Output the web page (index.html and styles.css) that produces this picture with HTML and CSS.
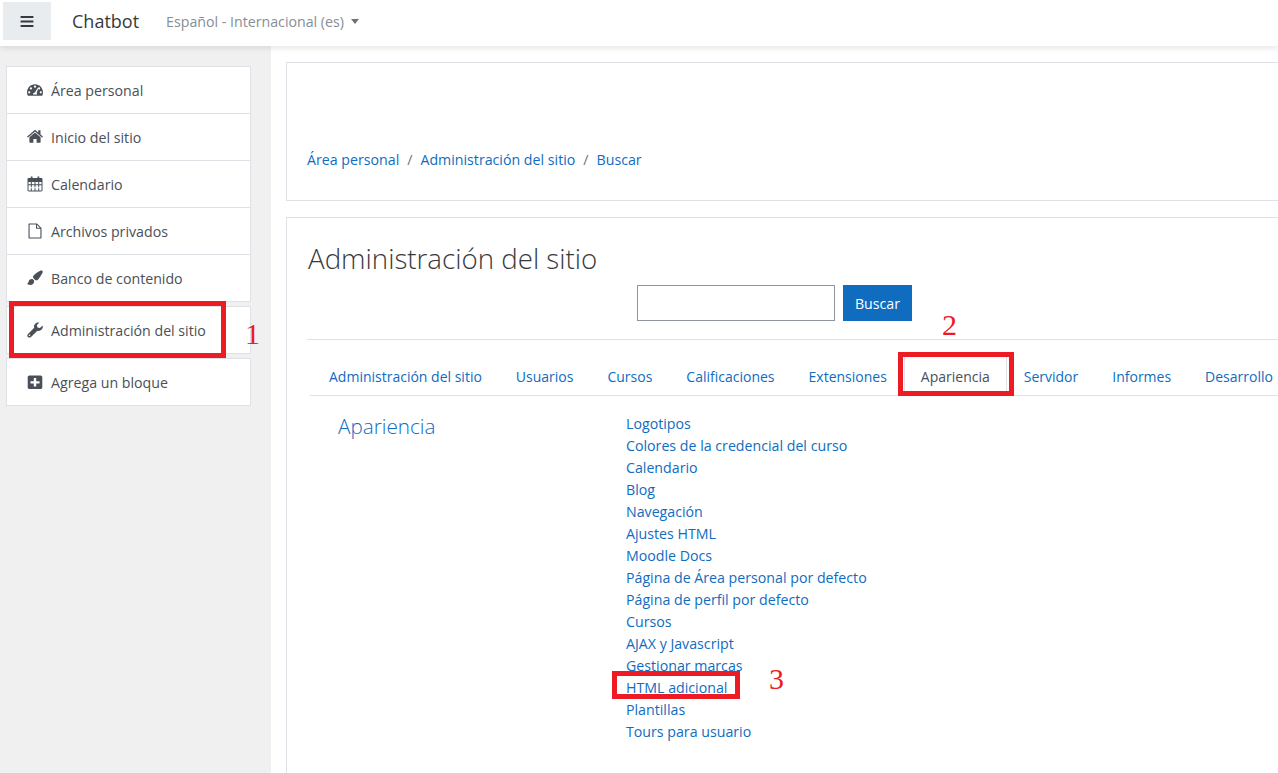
FILE: index.html
```html
<!DOCTYPE html>
<html lang="es">
<head>
    <meta charset="UTF-8">
    <meta name="viewport" content="width=device-width, initial-scale=1.0">
    <title>Administración del sitio</title>
    <link rel="stylesheet" href="styles.css">
</head>
<body>

    <header class="navbar">
        <button class="menu-toggle" aria-label="Menu">
            <svg class="bars" viewBox="0 0 14 12"><path d="M0 0h14v2.200H0zM0 4.900h14v2.200H0zM0 9.800h14V12H0z"/></svg>
        </button>
        <span class="brand">Chatbot</span>
        <span class="lang">Español - Internacional (es)<i class="caret"></i></span>
    </header>

    <div class="page">
        <!-- Left column -->
        <aside class="sidebar">
            <ul class="nav-group">
                <li>
                    <svg class="icon" viewBox="0 0 16 16"><path fill-rule="evenodd" d="M8 2.200C3.600 2.200 0 5.800 0 10.200c0 1.200.3 2.300.7 3.300.1.200.3.3.5.3h13.600c.2 0 .4-.1.5-.3.4-1 .7-2.100.7-3.300 0-4.400-3.600-8-8-8zM8 3.600a1.100 1.100 0 1 1 0 2.200 1.100 1.100 0 0 1 0-2.200zM3.900 5.300a1.100 1.100 0 1 1 0 2.200 1.100 1.100 0 0 1 0-2.200zM12.100 5.300a1.100 1.100 0 1 1 0 2.200 1.100 1.100 0 0 1 0-2.200zM2.200 9.200a1.100 1.100 0 1 1 0 2.200 1.100 1.100 0 0 1 0-2.200zM13.800 9.200a1.100 1.100 0 1 1 0 2.200 1.100 1.100 0 0 1 0-2.200zM10.400 6.200l.8.3-1.600 4.600c.4.4.6.9.5 1.400H6c-.2-1.100.7-2.100 1.900-2.100z"/></svg>
                    Área personal
                </li>
                <li>
                    <svg class="icon" viewBox="0 0 16 16"><path d="M8 3.600 2.400 8.200v5c0 .3.2.5.5.5h3.500v-3.600h3.200v3.600h3.500c.3 0 .5-.2.5-.5v-5zM15.800 7.400 13.500 5.500V1.600c0-.2-.1-.3-.3-.3h-1.700c-.2 0-.3.1-.3.3v1.900L8.600 1.200c-.4-.3-.9-.3-1.200 0L.2 7.400c-.1.1-.1.3 0 .4l.5.6c.1.1.3.1.4 0L8 2.600l6.900 5.800c.1.1.3.1.4 0l.5-.6c.1-.1.1-.3 0-.4z"/></svg>
                    Inicio del sitio
                </li>
                <li>
                    <svg class="icon" viewBox="0 0 16 16"><path fill-rule="evenodd" d="M4 .5h1.200c.2 0 .3.1.3.3V2h5V.8c0-.2.1-.3.3-.3H12c.2 0 .3.1.3.3V2h2c.6 0 1.200.5 1.200 1.200v11.100c0 .6-.6 1.200-1.200 1.200H1.700c-.6 0-1.200-.6-1.200-1.200V3.200C.5 2.500 1.100 2 1.700 2h2V.8c0-.2.1-.3.3-.3zM1.500 6v8.500h2.300v-2.300h1v2.300h2.700v-2.300h1v2.300h2.700v-2.300h1v2.300h2.300V6h-2.300v2.300h2.300v1h-2.300v1.900h-1V9.300H8.500v1.900h-1V9.300H4.800v1.900h-1V9.300H1.500v-1h2.300V6zM4.800 6v2.300h2.700V6zM8.500 6v2.300h2.700V6z"/></svg>
                    Calendario
                </li>
                <li>
                    <svg class="icon" viewBox="0 0 16 16"><path fill-rule="evenodd" d="M2 .5h8l4.500 4.500v10c0 .3-.2.5-.5.5H2c-.3 0-.5-.2-.5-.5V1c0-.3.2-.5.5-.5zM2.600 1.600v12.800h10.800V5.800H9.500c-.3 0-.5-.2-.5-.5V1.600zM10 1.900v2.900h2.900z"/></svg>
                    Archivos privados
                </li>
                <li>
                    <svg class="icon" viewBox="0 0 16 16"><path d="M14.300.5c.8 0 1.500.6 1.500 1.300 0 .5-.3 1.100-.7 1.800-1.400 2.500-2.800 4.700-4 5.800-.6.6-1.200.9-1.900.9-.4 0-.7-.1-1-.3L6.300 8c-.2-.3-.3-.7-.3-1 0-.6.3-1.300.9-1.800C9.300 3 12.700.5 14.300.5zM5.200 9c.9.2 1.700 1 1.900 1.900.1 2.500-1.600 4-4 4-1.400 0-2.600-.4-3.100-1.400.9-.1 1.300-.7 1.500-1.600C1.800 10.200 3.100 8.900 5.200 9z"/></svg>
                    Banco de contenido
                </li>
            </ul>
            <ul class="nav-group">
                <li>
                    <svg class="icon" viewBox="0 0 16 16"><path fill-rule="evenodd" d="M15.400 3.700c.3-.1.4 0 .4.3.1 1.500-.3 2.800-1.400 3.800-1.200 1.100-2.600 1.300-4 .9L4 14.900c-.9.9-2.300.9-3.100 0-.8-.8-.8-2.100.1-3l6.200-6.100c-.4-1.500-.1-2.900 1-4C9.300.7 10.500.3 12 .4c.3 0 .4.2.2.4L9.900 3.100l.6 2.400 2.400.6zM2.500 12.500a.8.8 0 1 0 0 1.600.8.8 0 0 0 0-1.600z"/></svg>
                    Administración del sitio
                </li>
            </ul>
            <ul class="nav-group">
                <li>
                    <svg class="icon" viewBox="0 0 16 16"><path fill-rule="evenodd" d="M2.500 1.500h11c1 0 1.800.8 1.800 1.800v10c0 1-.8 1.800-1.800 1.800h-11c-1 0-1.800-.8-1.800-1.800v-10c0-1 .8-1.800 1.800-1.800zM6.800 4v3.200H3.500v2.200h3.300v3.200H9.200V9.400h3.300V7.200H9.200V4z"/></svg>
                    Agrega un bloque
                </li>
            </ul>
        </aside>

        <!-- Main Content -->
        <main class="content">
            <section class="card card-top">
                <nav class="breadcrumb">
                    <a>Área personal</a><span class="sep">/</span><a>Administración del sitio</a><span class="sep">/</span><a>Buscar</a>
                </nav>
            </section>

            <section class="card card-main">
                <h1>Administración del sitio</h1>
                <form class="search">
                    <input type="text" class="search-input">
                    <button type="button" class="search-btn">Buscar</button>
                </form>
                <hr class="rule">
                <ul class="tabs">
                    <li>Administración del sitio</li>
                    <li>Usuarios</li>
                    <li>Cursos</li>
                    <li>Calificaciones</li>
                    <li>Extensiones</li>
                    <li class="active">Apariencia</li>
                    <li>Servidor</li>
                    <li>Informes</li>
                    <li>Desarrollo</li>
                </ul>
                <div class="settings">
                    <h2>Apariencia</h2>
                    <ul class="links">
                        <li>Logotipos</li>
                        <li>Colores de la credencial del curso</li>
                        <li>Calendario</li>
                        <li>Blog</li>
                        <li>Navegación</li>
                        <li>Ajustes HTML</li>
                        <li>Moodle Docs</li>
                        <li>Página de Área personal por defecto</li>
                        <li>Página de perfil por defecto</li>
                        <li>Cursos</li>
                        <li>AJAX y Javascript</li>
                        <li>Gestionar marcas</li>
                        <li>HTML adicional</li>
                        <li>Plantillas</li>
                        <li>Tours para usuario</li>
                    </ul>
                </div>
            </section>
        </main>
    </div>

    <!-- Red marks drawn over the screenshot -->
    <div class="mark mark-1"></div>
    <div class="mark mark-2"></div>
    <div class="mark mark-3"></div>
    <span class="num num-1">1</span>
    <span class="num num-2">2</span>
    <span class="num num-3">3</span>

</body>
</html>
```

FILE: styles.css
```css
html, body { margin: 0; height: 773px; overflow: hidden; }
body { font-family: "Open Sans", "Noto Sans", Arial, sans-serif; font-size: 14px; color: #495057; background: #fff; }
ul { list-style: none; margin: 0; padding: 0; }

.navbar {
    position: relative;
    z-index: 2;
    height: 46px;
    box-sizing: border-box;
    padding-bottom: 4px;
    display: flex;
    align-items: center;
    background: #fff;
    box-shadow: 0 2px 6px rgba(0, 0, 0, 0.1);
}
.menu-toggle {
    width: 48px;
    height: 38px;
    margin-left: 3px;
    padding: 0;
    border: none;
    background: #e9ecef;
    display: flex;
    align-items: center;
    justify-content: center;
}
.bars { width: 14px; height: 11px; fill: #343a40; }
.brand { margin-left: 21px; font-size: 18px; color: #373a3c; }
.lang { margin-left: 27px; font-size: 14.2px; color: #868e96; }
.caret {
    display: inline-block;
    margin-left: 7px;
    vertical-align: 3px;
    border-top: 5px solid #6a737b;
    border-left: 4.5px solid transparent;
    border-right: 4.5px solid transparent;
}

.page { display: flex; height: 727px; overflow: hidden; }
.sidebar { width: 271px; flex: none; background: #f0f0f0; padding: 20px 20px 0 6px; box-sizing: border-box; }
.nav-group { background: #fff; border: 1px solid #dee2e6; margin-bottom: 4px; }
.nav-group li {
    height: 46px;
    display: flex;
    align-items: center;
    padding-left: 20px;
    color: #495057;
    font-size: 14.2px;
}
.nav-group li + li { border-top: 1px solid #dee2e6; }
.icon { width: 16px; height: 16px; margin-right: 8px; fill: #4a5058; flex: none; }

.content { padding: 16px 0 0 15px; width: 1100px; flex: none; }
.card { border: 1px solid #dee2e6; background: #fff; }
.card-top { height: 137px; margin-bottom: 16px; padding: 0 20px; display: flex; align-items: flex-end; }
.breadcrumb { color: #0f6cbf; font-size: 14.2px; padding-bottom: 31px; }
.breadcrumb .sep { color: #6c757d; margin: 0 8px; }
.card-main { height: 556px; padding: 0 20px; border-bottom: 0; }

h1 { margin: 22px 0 0 1px; font-size: 27.7px; font-weight: 300; line-height: 36px; color: #373a3c; }

.search { display: flex; gap: 8px; margin: 9px 0 0 330px; }
.search-input { width: 198px; height: 36px; box-sizing: border-box; border: 1px solid #8f959e; padding: 0; background: #fff; }
.search-btn { width: 69px; height: 36px; border: none; background: #0f6cbf; color: #fff; font-family: inherit; font-size: 14.2px; }

.rule { border: 0; border-top: 1px solid #dee2e6; margin: 18px 0 0; }

.tabs { display: flex; margin: 12px 0 0 3px; padding-left: 2px; border-bottom: 1px solid #dee2e6; height: 43px; color: #0f6cbf; font-size: 14px; }
.tabs li { padding: 15px 17px 0; white-space: nowrap; box-sizing: border-box; height: 44px; }
.tabs .active { color: #495057; background: #fff; border: 1px solid #dee2e6; border-bottom-color: #fff; padding: 14px 16px 0; }

.settings { display: grid; grid-template-columns: 319px auto; padding-top: 17px; }
.settings h2 { margin: 0 0 0 31px; font-size: 20.7px; font-weight: 300; line-height: 26px; color: #0f6cbf; }
.links { color: #0f6cbf; font-size: 14.2px; line-height: 22px; }

.mark { position: absolute; border: 5px solid #ed1c24; box-sizing: border-box; }
.mark-1 { left: 9px; top: 301px; width: 217px; height: 57px; }
.mark-2 { left: 898px; top: 352px; width: 116px; height: 44px; }
.mark-3 { left: 612px; top: 671px; width: 128px; height: 28px; }
.num { position: absolute; font-family: "Liberation Serif", serif; font-size: 30px; line-height: 36px; color: #ed1c24; }
.num-1 { left: 245px; top: 316px; }
.num-2 { left: 942px; top: 307px; }
.num-3 { left: 769px; top: 661px; }
```
